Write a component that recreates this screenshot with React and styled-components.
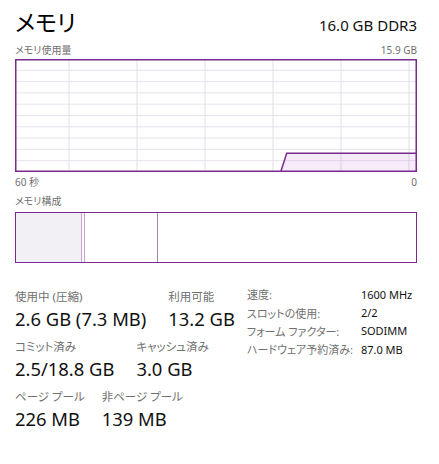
import React from 'react';
import styled, { createGlobalStyle } from 'styled-components';

const GlobalStyle = createGlobalStyle`
  html, body {
    margin: 0;
    padding: 0;
    background: #ffffff;
  }
  body {
    font-family: "Noto Sans", "Noto Sans CJK JP", sans-serif;
    font-feature-settings: "palt";
    color: #1a1a1a;
  }
`;

const PURPLE = '#7a2a8f';

const Panel = styled.div`
  width: 439px;
  height: 464px;
  box-sizing: border-box;
  padding: 4px 22px 0 15px;
  background: #fff;
  overflow: hidden;
  white-space: nowrap;
`;

const Header = styled.div`
  display: flex;
  justify-content: space-between;
  align-items: baseline;
  height: 39px;
`;

const Title = styled.h1`
  margin: 0;
  font-size: 23px;
  font-weight: 400;
  line-height: 36px;
  color: #000;
`;

const Spec = styled.span`
  font-size: 15px;
  color: #111;
`;

const CaptionRow = styled.div`
  display: flex;
  justify-content: space-between;
  font-size: 10px;
  line-height: 14px;
  height: 14px;
  color: #707070;
  margin-top: ${p => p.$top || 0}px;
  margin-bottom: ${p => p.$bottom || 0}px;
`;

const GraphBox = styled.div`
  height: 113px;
  width: 402px;
  svg { display: block; }
`;

const CompositionBar = styled.div`
  display: flex;
  height: 51px;
  width: 402px;
  box-sizing: border-box;
  border: 1.5px solid ${PURPLE};
`;

const Segment = styled.div`
  flex: ${p => (p.$grow ? '1 1 auto' : `0 0 ${p.$w}px`)};
  background: ${p => p.$bg || '#fff'};
  border-right: ${p => (p.$line ? `1px solid ${p.$line}` : 'none')};
  box-sizing: border-box;
`;

const Stats = styled.div`
  display: flex;
  gap: 12px;
  margin-top: 26px;
`;

const StatRows = styled.div`
  display: flex;
  flex-direction: column;
  gap: 6px;
  flex-shrink: 0;
`;

const StatRow = styled.div`
  display: flex;
  gap: ${p => p.$gap}px;
`;

const Stat = styled.div`
  display: flex;
  flex-direction: column;
`;

const StatLabel = styled.span`
  font-size: 11.5px;
  line-height: 16px;
  color: #707070;
`;

const StatValue = styled.span`
  font-size: 18.4px;
  line-height: 28px;
  color: #111;
`;

const SpecTable = styled.div`
  display: grid;
  grid-template-columns: 114px auto;
  grid-auto-rows: 18.4px;
  align-items: center;
  margin-top: -4px;
  font-size: 11px;
  flex-shrink: 0;
`;

const SpecKey = styled.span`
  color: #707070;
`;

const SpecVal = styled.span`
  color: #111;
`;

const UsageGraph = () => {
  const w = 402;
  const h = 113;
  const vLines = [54, 122, 190, 258, 326, 394];
  const hLines = Array.from({ length: 9 }, (_, i) => ((i + 1) * h) / 10);
  return (
    <svg width={w} height={h} viewBox={`0 0 ${w} ${h}`}>
      <rect x="0" y="0" width={w} height={h} fill="#fff" />
      {hLines.map(y => (
        <line key={`h${y}`} x1="0" x2={w} y1={y} y2={y} stroke="#e9e1ec" strokeWidth="1" />
      ))}
      {vLines.map(x => (
        <line key={`v${x}`} x1={x} x2={x} y1="0" y2={h} stroke="#e4dde7" strokeWidth="1" />
      ))}
      <polygon points={`265.7,${h} 271.7,94.3 ${w},94.3 ${w},${h}`} fill="rgba(139,18,174,0.08)" />
      <polyline points={`265.7,${h} 271.7,94.3 ${w},94.3`} fill="none" stroke={PURPLE} strokeWidth="1.5" />
      <rect x="0.75" y="0.75" width={w - 1.5} height={h - 1.5} fill="none" stroke={PURPLE} strokeWidth="1.5" />
    </svg>
  );
};

const specs = [
  ['速度:', '1600 MHz'],
  ['スロットの使用:', '2/2'],
  ['フォーム ファクター:', 'SODIMM'],
  ['ハードウェア予約済み:', '87.0 MB'],
];

export default function App() {
  return (
    <>
      <GlobalStyle />
      <Panel>
        <Header>
          <Title>メモリ</Title>
          <Spec>16.0 GB DDR3</Spec>
        </Header>

        <CaptionRow $bottom={2}>
          <span>メモリ使用量</span>
          <span>15.9 GB</span>
        </CaptionRow>
        <GraphBox>
          <UsageGraph />
        </GraphBox>
        <CaptionRow $top={3}>
          <span>60 秒</span>
          <span>0</span>
        </CaptionRow>

        <CaptionRow $top={5} $bottom={4}>
          <span>メモリ構成</span>
        </CaptionRow>
        <CompositionBar>
          <Segment $w={66} $bg="#f3f0f5" $line="#c7a6d2" />
          <Segment $w={3} $bg="#faf8fb" $line="#c7a6d2" />
          <Segment $w={73} $line="#a883b4" />
          <Segment $grow />
        </CompositionBar>

        <Stats>
          <StatRows>
            <StatRow $gap={22}>
              <Stat>
                <StatLabel>使用中 (圧縮)</StatLabel>
                <StatValue>2.6 GB (7.3 MB)</StatValue>
              </Stat>
              <Stat>
                <StatLabel>利用可能</StatLabel>
                <StatValue>13.2 GB</StatValue>
              </Stat>
            </StatRow>
            <StatRow $gap={22}>
              <Stat>
                <StatLabel>コミット済み</StatLabel>
                <StatValue>2.5/18.8 GB</StatValue>
              </Stat>
              <Stat>
                <StatLabel>キャッシュ済み</StatLabel>
                <StatValue>3.0 GB</StatValue>
              </Stat>
            </StatRow>
            <StatRow $gap={17}>
              <Stat>
                <StatLabel>ページ プール</StatLabel>
                <StatValue>226 MB</StatValue>
              </Stat>
              <Stat>
                <StatLabel>非ページ プール</StatLabel>
                <StatValue>139 MB</StatValue>
              </Stat>
            </StatRow>
          </StatRows>
          <SpecTable>
            {specs.map(([k, v]) => (
              <React.Fragment key={k}>
                <SpecKey>{k}</SpecKey>
                <SpecVal>{v}</SpecVal>
              </React.Fragment>
            ))}
          </SpecTable>
        </Stats>
      </Panel>
    </>
  );
}
